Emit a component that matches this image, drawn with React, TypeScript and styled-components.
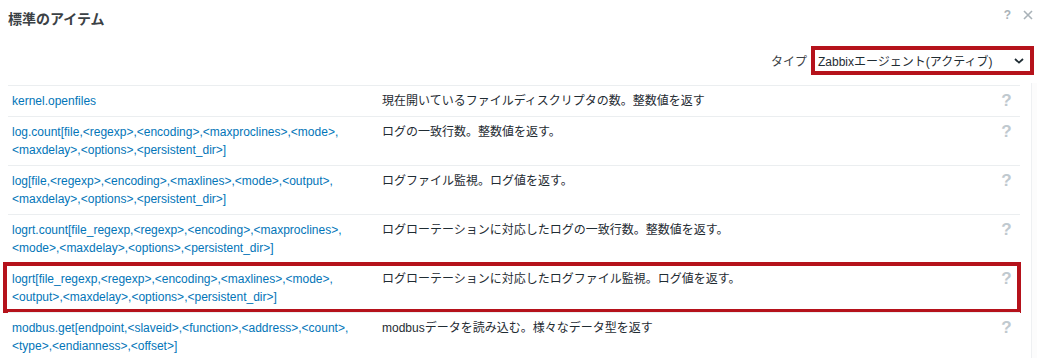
import React from 'react';
import styled, { createGlobalStyle } from 'styled-components';

const GlobalStyle = createGlobalStyle`
  html, body {
    margin: 0;
    padding: 0;
    background: #ffffff;
    font-family: Arial, "Liberation Sans", "Noto Sans CJK JP", sans-serif;
    font-size: 12px;
    color: #1f2c33;
    overflow: hidden;
  }
`;

const Dialog = styled.div`
  width: 1037px;
  height: 358px;
  display: flex;
  flex-direction: column;
  background: #fff;
`;

const Header = styled.div`
  display: flex;
  justify-content: space-between;
  align-items: flex-start;
  padding: 10px 4px 0 8px;
`;

const Title = styled.h4`
  margin: 0;
  font-size: 14px;
  line-height: 18px;
  font-weight: bold;
  color: #3b4145;
`;

const HeaderActions = styled.div`
  display: flex;
  align-items: center;
  gap: 12px;
  margin-top: -2px;
  color: #a9b2b8;
`;

const HelpMark = styled.span`
  font-size: 12px;
  line-height: 14px;
  font-weight: bold;
`;

const TypeRow = styled.div`
  display: flex;
  justify-content: flex-end;
  align-items: center;
  gap: 4px;
  padding-right: 3px;
  margin-top: 18px;
`;

const Label = styled.label`
  font-size: 12px;
  color: #3b4145;
`;

const SelectBox = styled.div`
  width: 223px;
  height: 29px;
  box-sizing: border-box;
  border: 4.5px solid #b5121b;
  display: flex;
  align-items: center;
  justify-content: space-between;
  padding: 0 6px 0 3px;
  font-size: 12px;
  color: #1f2c33;
`;

const Body = styled.div`
  flex: 1;
  display: flex;
  margin-top: 10px;
  min-height: 0;
`;

const List = styled.div`
  width: 1012px;
  margin-left: 8px;
`;

const ScrollTrack = styled.div`
  margin-left: 11px;
  flex: 1;
  border-left: 1px solid #eef0f2;
  background: #fcfcfc;
  margin-top: -2px;
`;

const Row = styled.div<{ $highlight?: boolean }>`
  display: grid;
  grid-template-columns: 370px 1fr 27px;
  border-top: 1px solid #ebeef0;
  position: relative;

  ${(p) =>
    p.$highlight &&
    `
    &::after {
      content: '';
      position: absolute;
      left: -5px;
      right: -1px;
      top: -2px;
      bottom: -1px;
      border: 4.5px solid #b5121b;
      pointer-events: none;
    }
  `}
`;

const KeyCell = styled.div`
  padding: 6px 4px;
  line-height: 18px;
  color: #0275b8;
`;

const DescCell = styled.div`
  padding: 6px 4px;
  line-height: 18px;
  color: #1f2c33;
`;

const HelpCell = styled.div`
  padding: 6px 0;
  line-height: 18px;
  font-size: 17px;
  font-weight: bold;
  color: #c0c9cf;
  text-align: center;
`;

const items = [
  { key: ['kernel.openfiles'], desc: '現在開いているファイルディスクリプタの数。整数値を返す' },
  {
    key: ['log.count[file,<regexp>,<encoding>,<maxproclines>,<mode>,', '<maxdelay>,<options>,<persistent_dir>]'],
    desc: 'ログの一致行数。整数値を返す。',
  },
  {
    key: ['log[file,<regexp>,<encoding>,<maxlines>,<mode>,<output>,', '<maxdelay>,<options>,<persistent_dir>]'],
    desc: 'ログファイル監視。ログ値を返す。',
  },
  {
    key: ['logrt.count[file_regexp,<regexp>,<encoding>,<maxproclines>,', '<mode>,<maxdelay>,<options>,<persistent_dir>]'],
    desc: 'ログローテーションに対応したログの一致行数。整数値を返す。',
  },
  {
    key: ['logrt[file_regexp,<regexp>,<encoding>,<maxlines>,<mode>,', '<output>,<maxdelay>,<options>,<persistent_dir>]'],
    desc: 'ログローテーションに対応したログファイル監視。ログ値を返す。',
    highlight: true,
  },
  {
    key: ['modbus.get[endpoint,<slaveid>,<function>,<address>,<count>,', '<type>,<endianness>,<offset>]'],
    desc: 'modbusデータを読み込む。様々なデータ型を返す',
  },
];

const App = () => {
  return (
    <Dialog>
      <GlobalStyle />
      <Header>
        <Title>標準のアイテム</Title>
        <HeaderActions>
          <HelpMark>?</HelpMark>
          <svg width="10" height="10" viewBox="0 0 10 10">
            <path d="M1 1L9 9M9 1L1 9" stroke="#a9b2b8" strokeWidth="1.6" />
          </svg>
        </HeaderActions>
      </Header>
      <TypeRow>
        <Label>タイプ</Label>
        <SelectBox>
          <span>Zabbixエージェント(アクティブ)</span>
          <svg width="10" height="6" viewBox="0 0 10 6">
            <path d="M1 1L5 4.6L9 1" stroke="#1f2c33" strokeWidth="1.8" fill="none" />
          </svg>
        </SelectBox>
      </TypeRow>
      <Body>
        <List>
          {items.map((item, i) => (
            <Row key={i} $highlight={item.highlight}>
              <KeyCell>
                {item.key.map((line, j) => (
                  <div key={j}>{line}</div>
                ))}
              </KeyCell>
              <DescCell>{item.desc}</DescCell>
              <HelpCell>?</HelpCell>
            </Row>
          ))}
        </List>
        <ScrollTrack />
      </Body>
    </Dialog>
  );
};

export default App;
